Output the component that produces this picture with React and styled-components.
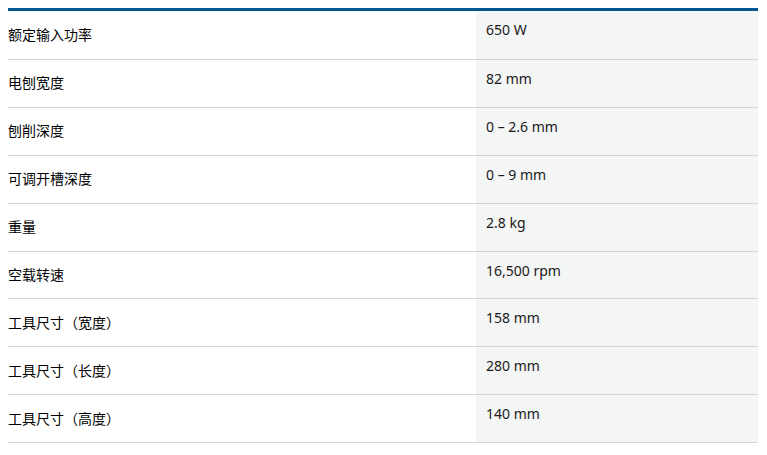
import styled, { createGlobalStyle } from "styled-components"

const GlobalStyle = createGlobalStyle`
  body {
    margin: 8px;
    background: #fff;
    font-family: "Noto Sans", "Noto Sans CJK SC", sans-serif;
    color: #000;
  }
`

const SpecTable = styled.div`
  width: 750px;
  border-top: 3px solid #005691;
`

const Row = styled.div`
  display: grid;
  grid-template-columns: 468px 1fr;
  height: 46.875px;
  border-bottom: 1px solid #d4d4d4;
  font-size: 14px;
  line-height: 20px;

  &:first-child {
    height: 48px;
  }
`

const Label = styled.div`
  display: flex;
  align-items: center;
`

const Value = styled.div`
  padding: 9px 0 0 10px;
  background: #f4f5f5;
  color: #1a1a1a;
`

const specs = [
  ["额定输入功率", "650 W"],
  ["电刨宽度", "82 mm"],
  ["刨削深度", "0 – 2.6 mm"],
  ["可调开槽深度", "0 – 9 mm"],
  ["重量", "2.8 kg"],
  ["空载转速", "16,500 rpm"],
  ["工具尺寸（宽度）", "158 mm"],
  ["工具尺寸（长度）", "280 mm"],
  ["工具尺寸（高度）", "140 mm"],
]

const App = () => {
  return (
    <>
      <GlobalStyle />
      <SpecTable>
        {specs.map(([label, value]) => (
          <Row key={label}>
            <Label>{label}</Label>
            <Value>{value}</Value>
          </Row>
        ))}
      </SpecTable>
    </>
  )
}

export default App
